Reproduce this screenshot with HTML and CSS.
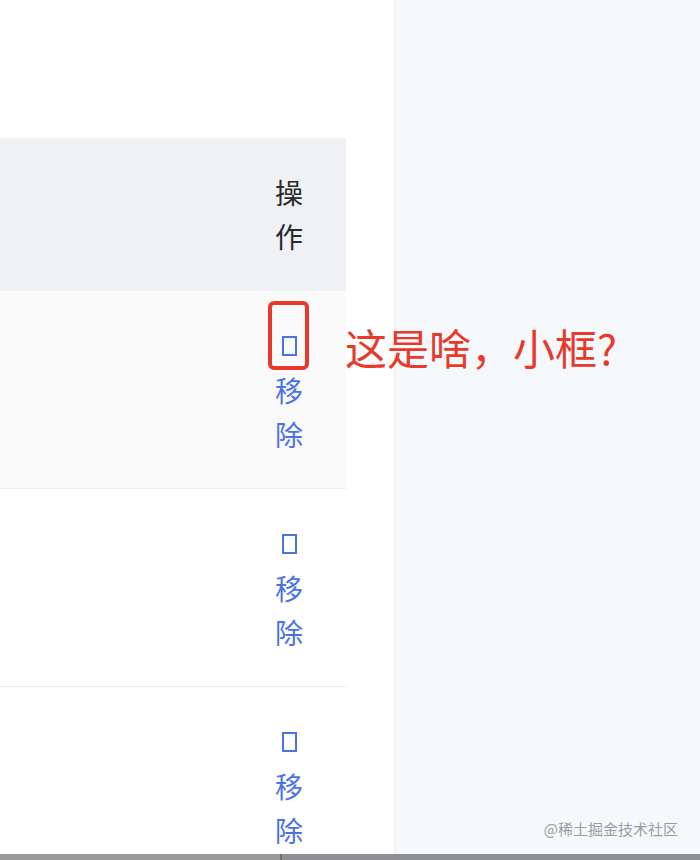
FILE: index.html
```html
<!DOCTYPE html>
<html lang="zh-CN">
<head>
    <meta charset="UTF-8">
    <meta name="viewport" content="width=device-width, initial-scale=1.0">
    <title>表格操作列</title>
    <link rel="stylesheet" href="styles.css">
</head>
<body>
    <div class="page">
        <div class="main">
            <table class="grid">
                <thead>
                    <tr>
                        <th class="col-fill"></th>
                        <th class="col-action">操作</th>
                    </tr>
                </thead>
                <tbody>
                    <tr class="row-hover">
                        <td class="col-fill"></td>
                        <td class="col-action"><span class="tofu"></span><a class="link">移除</a></td>
                    </tr>
                    <tr>
                        <td class="col-fill"></td>
                        <td class="col-action"><span class="tofu"></span><a class="link">移除</a></td>
                    </tr>
                    <tr>
                        <td class="col-fill"></td>
                        <td class="col-action"><span class="tofu"></span><a class="link">移除</a></td>
                    </tr>
                </tbody>
            </table>
        </div>
        <div class="side">
            <span class="watermark">@稀土掘金技术社区</span>
        </div>
    </div>

    <!-- annotation drawn over the screenshot -->
    <div class="mark-box"></div>
    <div class="mark-text">这是啥，小框?</div>

    <div class="statusbar">
        <div class="statusbar-left"></div>
        <div class="statusbar-right"></div>
    </div>
</body>
</html>
```

FILE: styles.css
```css
body {
    margin: 0;
    font-family: "Noto Sans CJK SC", "Noto Sans", sans-serif;
    background-color: #ffffff;
    overflow: hidden;
}

.page {
    display: flex;
    height: 860px;
}

.main {
    width: 394px;
    padding-top: 138px;
    box-sizing: border-box;
}

.side {
    flex: 1;
    background-color: #f6f9fc;
    border-left: 2px solid #eef0f3;
    display: flex;
    align-items: flex-end;
    justify-content: flex-end;
    padding: 0 22px 20px 0;
}

.watermark {
    font-size: 15px;
    color: #9b9b9b;
    line-height: 22px;
}

.grid {
    width: 346px;
    border-collapse: collapse;
    table-layout: fixed;
}

.grid th,
.grid td {
    font-size: 28px;
    line-height: 44px;
    font-weight: normal;
    text-align: left;
    vertical-align: middle;
}

.grid th {
    background-color: #eff1f5;
    color: #2a2a2a;
    padding: 32px 0 33px 0;
}

.grid td {
    padding: 33px 0 32px 0;
    border-bottom: 1px solid #ebeef3;
}

.grid .col-fill {
    width: auto;
}

.grid .col-action {
    width: 28px;
    padding-right: 43px;
    word-break: break-all;
}

.row-hover td {
    background-color: #fafafa;
}

.tofu {
    display: block;
    width: 11px;
    height: 16px;
    margin: 12px 0 12px 7px;
    border: 2px solid #4a72e8;
}

.link {
    color: #4a72e8;
    cursor: pointer;
}

.mark-box {
    position: absolute;
    left: 268px;
    top: 301px;
    width: 33px;
    height: 61px;
    border: 4px solid #e8392b;
    border-radius: 6px;
}

.mark-text {
    position: absolute;
    left: 345px;
    top: 323px;
    font-size: 42px;
    line-height: 48px;
    color: #e8392b;
}

.statusbar {
    position: fixed;
    left: 0;
    right: 0;
    bottom: 0;
    height: 6px;
    display: flex;
    background-color: #8e9093;
}

.statusbar-left {
    width: 280px;
    background-color: #9a9a9a;
    border-right: 2px solid #6f7175;
}

.statusbar-right {
    flex: 1;
}
```
